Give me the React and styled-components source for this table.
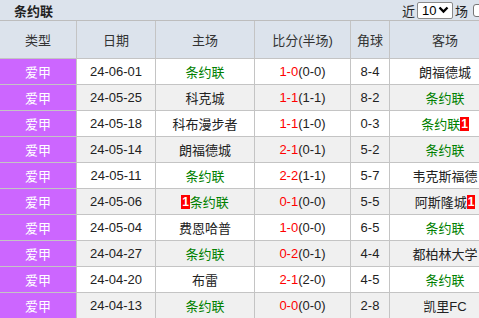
import React from "react";
import styled, { createGlobalStyle } from "styled-components";

const Global = createGlobalStyle`
  html, body { margin: 0; padding: 0; background: #fff; overflow: hidden; }
  body { font-family: "Liberation Sans", "Noto Sans CJK SC", sans-serif; }
`;

const Page = styled.div`
  width: 500px;
`;

const TitleBar = styled.div`
  height: 20px;
  background: #dce3ec;
  border-bottom: 1px solid #bdbdbd;
  display: flex;
  align-items: center;
  padding-left: 14px;
  padding-right: 0;
`;

const Title = styled.div`
  font-size: 13px;
  font-weight: bold;
  color: #222;
  flex: 1;
`;

const Controls = styled.div`
  display: flex;
  align-items: center;
  gap: 2px;
  font-size: 13px;
  color: #222;
  width: 98px;
`;

const SelectBox = styled.div`
  width: 34px;
  height: 15px;
  border: 1px solid #8a8a8a;
  border-radius: 2px;
  background: #fff;
  display: flex;
  align-items: center;
  justify-content: space-between;
  padding: 0 3px 0 4px;
  box-sizing: border-box;
  width: 36px;
  height: 17px;
  font-size: 13px;
  color: #000;
`;

const Check = styled.div`
  width: 13px;
  height: 13px;
  border: 1px solid #767676;
  border-radius: 3px;
  background: #fff;
  margin-left: 3px;
  box-sizing: border-box;
`;

const Grid = styled.div`
  display: grid;
  grid-template-columns: 76px 78px 98px 95px 38px 1fr;
  column-gap: 1px;
  row-gap: 1px;
  background: #c4c4c4;
  border-bottom: 1px solid #c4c4c4;
`;

const HeadCell = styled.div`
  height: 37px;
  background: #dce3ec;
  display: flex;
  align-items: center;
  justify-content: center;
  font-size: 13px;
  color: #333;
`;

const Cell = styled.div`
  height: 25px;
  background: ${(p) => (p.$type ? "#cc66ff" : p.$alt ? "#f0f0f0" : "#fff")};
  color: ${(p) => (p.$type ? "#fff" : p.$green ? "#008000" : "#222")};
  display: flex;
  align-items: center;
  justify-content: center;
  font-size: 13px;
  white-space: nowrap;
`;

const Red = styled.span`
  color: #ff0000;
`;

const Badge = styled.span`
  background: #ff0000;
  color: #fff;
  font-weight: bold;
  font-size: 12px;
  line-height: 14px;
  padding: 0 1px;
`;

const rows = [
  ["24-06-01", "条约联", "1-0", "(0-0)", "8-4", "朗福德城"],
  ["24-05-25", "科克城", "1-1", "(1-1)", "8-2", "条约联"],
  ["24-05-18", "科布漫步者", "1-1", "(1-0)", "0-3", "条约联", "", "1"],
  ["24-05-14", "朗福德城", "2-1", "(0-1)", "5-2", "条约联"],
  ["24-05-11", "条约联", "2-2", "(1-1)", "5-7", "韦克斯福德"],
  ["24-05-06", "条约联", "0-1", "(0-0)", "5-5", "阿斯隆城", "1", "1"],
  ["24-05-04", "费恩哈普", "1-0", "(0-0)", "6-5", "条约联"],
  ["24-04-27", "条约联", "0-2", "(0-1)", "4-4", "都柏林大学"],
  ["24-04-20", "布雷", "2-1", "(2-0)", "4-5", "条约联"],
  ["24-04-13", "条约联", "0-0", "(0-0)", "2-8", "凯里FC"],
];

const Chevron = () => (
  <svg width="11" height="8" viewBox="0 0 11 8">
    <path d="M1.5 1.5 L5.5 5.5 L9.5 1.5" fill="none" stroke="#000" strokeWidth="2.4" />
  </svg>
);

export default function App() {
  const heads = ["类型", "日期", "主场", "比分(半场)", "角球", "客场"];
  return (
    <Page>
      <Global />
      <TitleBar>
        <Title>条约联</Title>
        <Controls>
          <span>近</span>
          <SelectBox>
            <span>10</span>
            <Chevron />
          </SelectBox>
          <span>场</span>
          <Check />
        </Controls>
      </TitleBar>
      <Grid>
        {heads.map((h) => (
          <HeadCell key={h}>{h}</HeadCell>
        ))}
        {rows.map((r, i) => {
          const alt = i % 2 === 1;
          const home = r[1];
          const away = r[5];
          return (
            <React.Fragment key={r[0]}>
              <Cell $type>爱甲</Cell>
              <Cell $alt={alt}>{r[0]}</Cell>
              <Cell $alt={alt} $green={home === "条约联"}>
                {r[6] ? <Badge>{r[6]}</Badge> : null}
                {home}
              </Cell>
              <Cell $alt={alt}>
                <Red>{r[2]}</Red>
                {r[3]}
              </Cell>
              <Cell $alt={alt}>{r[4]}</Cell>
              <Cell $alt={alt} $green={away === "条约联"}>
                {away}
                {r[7] ? <Badge>{r[7]}</Badge> : null}
              </Cell>
            </React.Fragment>
          );
        })}
      </Grid>
    </Page>
  );
}
